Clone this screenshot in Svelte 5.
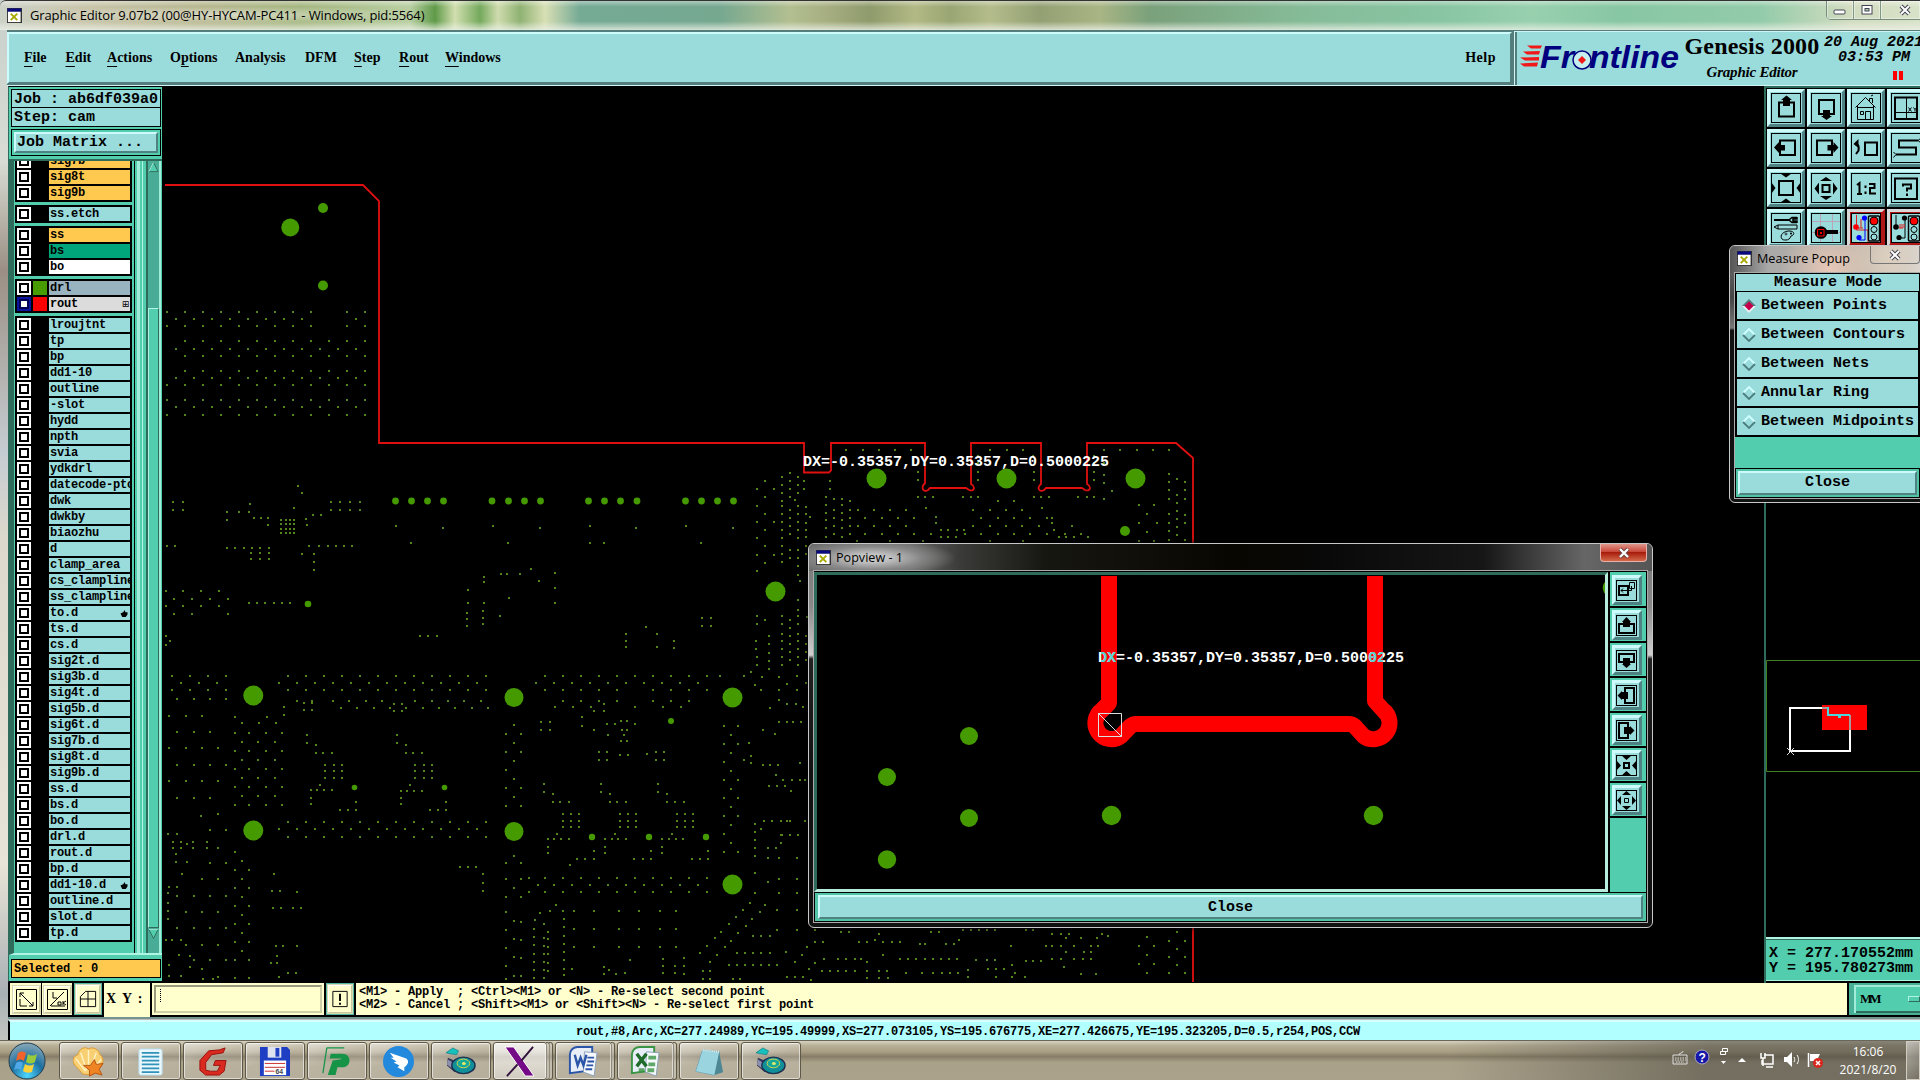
<script>
  const menus = [
    { name: 'File', key: 0 }, { name: 'Edit', key: 0 }, { name: 'Actions', key: 0 },
    { name: 'Options', key: 1 }, { name: 'Analysis', key: -1 }, { name: 'DFM', key: -1 },
    { name: 'Step', key: 0 }, { name: 'Rout', key: 0 }, { name: 'Windows', key: 0 }
  ];

  const plain = (names) => names.map((name) => ({ name }));
  const groups = [
    [{ name: 'sig7b', kind: 'signal' }, { name: 'sig8t', kind: 'signal' }, { name: 'sig9b', kind: 'signal' }],
    [{ name: 'ss.etch' }],
    [{ name: 'ss', kind: 'signal' }, { name: 'bs', kind: 'mask' }, { name: 'bo', kind: 'paste' }],
    [{ name: 'drl', kind: 'drill', color: '#489c00' }, { name: 'rout', kind: 'rout', color: '#ff0000', active: true, mark: '⊞' }],
    plain(['lroujtnt', 'tp', 'bp', 'dd1-10', 'outline', '-slot', 'hydd', 'npth', 'svia', 'ydkdrl',
      'datecode-pto', 'dwk', 'dwkby', 'biaozhu', 'd', 'clamp_area', 'cs_clampline', 'ss_clampline', 'to.d', 'ts.d',
      'cs.d', 'sig2t.d', 'sig3b.d', 'sig4t.d', 'sig5b.d', 'sig6t.d', 'sig7b.d', 'sig8t.d', 'sig9b.d', 'ss.d',
      'bs.d', 'bo.d', 'drl.d', 'rout.d', 'bp.d', 'dd1-10.d', 'outline.d', 'slot.d', 'tp.d'])
  ];
  const linked = ['to.d', 'dd1-10.d'];

  const tools = ['up', 'down', 'home', 'xy', 'left', 'right', 'back', 'snake', 'fit', 'out', 'ratio', 'help', 'setup', 'snap', 'net1', 'net2'];
  const popTools = ['pick', 'pup', 'pdown', 'pleft', 'pright', 'pin', 'pout'];
  const modes = ['Between Points', 'Between Contours', 'Between Nets', 'Annular Ring', 'Between Midpoints'];

  // line = stroked with 2px, thin = stroked with 1px, solid = filled
  const shapes = {
    up: { line: 'M8 9.5H23V23.500H8z', solid: 'M15.500 2.500L21 7H19V13H12V7H10z' },
    down: { line: 'M8 7H23V21H8z', solid: 'M15.500 27L21 23H19V17H12V23H10z' },
    left: { line: 'M9 7.500H24V22H9z', solid: 'M3 14.500L8 9V12H14V17.500H8V20z' },
    right: { line: 'M6 7.500H21V22H6z', solid: 'M27.500 14.500L22.500 9V12H16.500V17.500H22.500V20z' },
    home: { thin: 'M4.500 14.500L14.500 4.500L24.500 14.500M6.500 13V26.500H22.500V13M6 14.500H23M9.500 18.500H12.500V21.500H9.500zM14.500 26V18.500H19.500V26M18.500 8V5.500H21.500V10M20 3l2-1' },
    xy: { line: 'M4 4.500H26V26H4z', thin: 'M15.500 4V26M4 19.500H26M17.500 14.500l3 4m0-4l-3 4M22.500 14.500l1.500 2l1.500-2M24 16.500v2' },
    back: { line: 'M14 9.500H26V22H14zM4 11C8 11 8 14 7.500 17.500L5 21', solid: 'M2.500 11L7.500 6V15z' },
    snake: { line: 'M27 7.500H8V14.500H25V21.500H5', thin: 'M30 5l-3 2.500l3 2.500M2.500 19l2.500 2.500l-2.500 3' },
    fit: { line: 'M8 8H22V22H8z', solid: 'M9.500 0.500H20.500L15 4.500zM9.500 29.500H20.500L15 25.500zM0.500 9.500V20.500L4.500 15zM29.500 9.500V20.500L25.500 15z' },
    out: { line: 'M11.500 12H18.500V19H11.500z', solid: 'M15 4L21 8H9zM15 27L21 23H9zM3.500 15.500L8 9.500V21.500zM26.500 15.500L22 9.500V21.500z' },
    help: { line: 'M4 5.500H26V26H4zM12 13.500V11.500H20V15.500H16V18.500M16 20.500V23' },
    ratio: { line: 'M6 12L8.500 10V21M6 21H11M14.500 12.500V15M14.500 18.500V21M18 11H23.500V15H19V20.500H25' },
    pick: { line: 'M3 6H12V15H3z', thin: 'M5 10.500H15.500V6M5 10.500l2-2m-2 2l2 2M13.500 2.500H18.500V8.500H13.500z' },
    pup: { line: 'M3 9H18V18H3z', solid: 'M10.500 2L15 7H14V12H7V7H6z' },
    pdown: { line: 'M3 4H18V12H3z', solid: 'M10.500 18L15 14H14V8H7V14H6z' },
    pleft: { line: 'M9 3H18V18H9z', solid: 'M1.500 10.500L6 6V7H12V14H6V15z' },
    pright: { line: 'M3 3H12V18H3z', solid: 'M18.500 10.500L14 6V7H8V14H14V15z' },
    pin: { line: 'M8 8H13V13H8z', solid: 'M5 0H16L10.500 5zM5 21H16L10.500 16zM0 5V16L5 10.500zM21 5V16L16 10.500z' },
    pout: { thin: 'M8.500 8.500H12.500V12.500H8.500z', solid: 'M10.500 1L15 5H6zM10.500 20L15 16H6zM1 10.500L5 6V15zM20 10.500L16 6V15z' }
  };

  // drill hits, one patch per part of the board: rows are [y, ...x], cols are [x, ...y]
  const run = (from, to, step) => {
    const list = [];
    for (let v = from; v <= to; v += step) list.push(v);
    return list;
  };
  const r501 = run(501, 1095, 54);
  const r528 = run(528, 1070, 54);
  const r555 = run(555, 1095, 54);
  const gapRow = r501.filter((x) => x !== 987);
  const sparse = [705, 747, 798, 846];
  const patches = [
    {
      x: 0, y: 80, sy: 3,
      rows: [
        [695, ...gapRow], [717, ...run(528, 906, 54), 1068], [738, ...gapRow], [783, ...r555], [807, ...r528],
        [828, ...r555], [873, ...r555], [893, ...r528], [914, ...r501], [959, ...r501], [980, ...r528], [1004, ...r501],
        [1218, 894], [1239, 906], [1272, 750], [1295, 747, 717, 681], [1320, 681], [1314, 762, 783, 804], [1335, 804, 921],
        [1284, 882], [1317, 918], [1304, 939, 963], [1266, 519, 549, 993, 1020, 1050, 1080], [1290, 519, 549, 993, 1020, 1050, 1080],
        [1320, 843, 857, 870, 882], [1332, 843, 857, 870, 882], [1346, 843, 857, 870, 882], [1358, 843, 857, 870, 882]
      ],
      cols: []
    },
    {
      x: 0, y: 540, sy: 2.904,
      rows: [
        [17, 501, 525, 927, 957, 984, 1008, 1032, 1056], [22, ...run(681, 807, 25)], [38, 753, 780, 807], [55, 753, 780, 807],
        [40, 906, 942], [64, 942], [87, 942], [147, 498, 549, 603, 657], [170, 522, 576, 630, 684], [191, 498, 549, 603, 657],
        [214, 522, 576, 684], [183, ...run(747, 872, 24.600)], [292, 510], [279, 497], [305, 497],
        [395, 516, 570, 624, 678, ...run(864, 1139, 54)], [415, 543, 597, 651, ...run(837, 1139, 54)], [435, 516, 570, 624, 678, ...run(864, 1139, 54)],
        [462, 531, 582, 630, 678], [467, 891, 936, 999, 1047, 1098], [472, 912, 936], [488, 1023, 1071, 1122], [484, 852], [508, 852], [495, 912, 936],
        [511, 507, 558, 606], [514, 705, 801], [532, 726, 777, 828], [558, 531, 582, 630], [560, ...sparse], [586, 726, 774, 825],
        [604, 507, 558, 606, 654], [612, ...sparse], [638, 726, 774, 825], [653, 531, 582, 630, 678], [665, ...sparse], [690, 726, 774, 825],
        [700, 507, 558, 606, 654], [716, ...sparse], [743, 726, 774, 825], [748, 531, 582, 630], [769, ...sparse],
        [566, 921], [589, 921], [595, 948], [618, 948, 969, 996], [653, 975, 1002, 1026], [671, 975, 1002, 1026], [690, 975, 1002, 1026],
        [712, 960], [727, 933, 951, 972, 996], [748, 933], [767, 933], [760, 1068], [784, 1020, 1044, 1068],
        [819, ...run(864, 1139, 54)], [839, ...run(837, 1139, 54)], [862, ...run(864, 1139, 54)],
        [796, 654], [801, 603], [842, 630, 678], [854, 504, 531], [877, 519, 543, 579, 621], [884, 561], [893, 519, 543, 579, 621, 654],
        [911, 528], [934, 528, 561], [938, 630, 678], [906, 705], [932, 726], [957, 705, 747], [970, 546], [984, 606, 654, 726], [1010, 705, 747],
        [1036, 726], [1063, 705, 747], [1088, 726], [1115, 705, 747], [1140, 726], [1167, 705, 747], [1193, 726], [1219, 705, 747], [1271, 705, 747],
        [1007, 507, 531], [1024, 504], [1034, 531, 582, 630, 678], [1053, 504], [1078, 504], [1080, 558, 606, 654], [1100, 504],
        [1127, 531, 582, 630, 678], [1161, 498, 516, 543], [1175, 558, 606, 654], [1204, 537], [1207, 570], [1221, 582, 630, 678],
        [1234, 507], [1240, 570], [1246, 606], [1266, 507, 543], [1275, 609, 639], [1270, 654],
        [969, 822], [1019, 816, 840], [1021, 891], [1070, 819, 843, 879, 903], [1179, 828, 849, 891], [1207, 831], [1228, 813, 831], [1257, 864, 888], [1269, 837]
      ],
      cols: []
    },
    {
      x: 380, y: 480, sy: 3,
      rows: [
        [138, 48, 339, 630, 918], [144, 189, 480, 768, 1059], [188, 93, 384, 630, 672, 963],
        [267, 453], [282, 363, 381, 420], [303, 477], [354, 387], [408, 360], [468, 120, 144, 171],
        [441, 798], [414, 966, 993], [438, 966, 993],
        [588, ...run(48, 318, 54), ...run(495, 981, 54), 1020, 1092], [609, ...run(21, 291, 54), ...run(468, 955, 54)],
        [630, ...run(48, 318, 54), 495, 549, 603, 657, 711, 819, 873, 927, 981], [663, 6, 105, 156, 204, 252, 303, 549, 603, 657, 711, 819, 873, 927],
        [672, 42, 66, 672], [684, 30, 78, 129, 177, 225, 276, 324], [692, 42, 66, 642, 672], [681, 525, 579, 633, 765, 849, 903],
        [711, 606], [738, 606], [726, 483, 510], [750, 483, 510, 642, 726, 741], [732, 681, 705, 765], [723, 723, 741], [765, 684, 732], [783, 723, 741],
        [816, 657, 681, 828, 852], [840, 657, 681, 828, 852], [825, 720, 744], [822, 801],
        [765, 51], [789, 51], [795, 78], [819, 78, 99, 126], [855, 105, 132, 156], [873, 105, 132, 156], [894, 105, 132, 156],
        [915, 90], [932, 63, 81, 102, 126], [954, 63], [972, 63], [966, 198], [990, 150, 174, 198],
        [1026, ...run(48, 318, 54)], [1047, ...run(21, 291, 54)], [1071, ...run(48, 318, 54)],
        [912, 492, 663, 834], [936, 492, 663, 834], [942, 519, 690, 861], [966, 519, 540, 567, 690, 711, 738, 861, 885, 912],
        [1002, 549, 573, 597, 720, 744, 768, 891, 915, 939], [1023, 549, 573, 597, 720, 744, 768, 891, 915, 939], [1041, 549, 573, 597, 720, 744, 768, 891, 915, 939],
        [1062, 531, 705, 876], [1078, 504, 522, 543, 567, 675, 696, 714, 738, 846, 867, 888, 909], [1101, 504, 675, 846], [1119, 504, 675, 846],
        [1113, 642, 813, 984], [1137, 591, 615, 642, 762, 789, 813, 936, 960, 984], [1155, 570],
        [1161, 240, 264, 288], [1194, 447, ...run(495, 981, 54)], [1215, 474, ...run(522, 955, 54)], [1236, 447, ...run(495, 981, 54)],
        [1275, 528, 1155], [1293, 510, 549, 582, 642, 717, 777, 840, 888], [1299, 480], [1347, 582, 642, 717, 777, 840, 888],
        [1401, 582, 642, 717, 777, 840, 888], [1440, 750], [1461, 672], [1470, 687], [1482, 672, 708], [1479, 735],
        [576, 1113], [591, 1146, 1197], [615, 1125], [612, 1221], [630, 1143, 1197, 1251], [660, 1197], [672, 1221, 1248], [684, 1170],
        [726, 1197, 1221, 1239], [750, 1149], [762, 1185], [789, 1107], [828, 1113], [840, 1092], [849, 1113], [855, 1149, 1170, 1194],
        [885, 1188], [900, 1209, 1236], [918, 1167, 1191, 1215], [933, 1233], [1023, 1152, 1176, 1203, 1221], [1047, 1143], [1065, 1206, 1230, 1254],
        [1089, 1203], [1104, 1164, 1188], [1134, 1164, 1197, 1251], [1197, 1197, 1251], [1206, 1164], [1239, 1197, 1251],
        [1269, 1110], [1290, 1089, 1191, 1251], [1296, 1140], [1311, 1068], [1317, 1116], [1332, 1047], [1338, 1098], [1350, 1191, 1251], [1356, 1023],
        [1359, 1074], [1368, 1119, 1143, 1170], [1374, 1005], [1383, 1053], [1398, 981], [1401, 1035], [1419, 960, 1071, 1095, 1119, 1143, 1170],
        [1425, 1011], [1446, 990, 1245], [1455, 1047, 1071, 1095, 1119, 1143, 1167, 1191], [1416, 1218], [1473, 969, 990], [1491, 1221, 1245], [1497, 969, 990, 1059, 1080]
      ],
      cols: [
        [264, 330, 369], [261, 399, 417, 438], [312, 291, 306, 369], [309, 393, 414, 432], [525, 279, 324, 369],
        [738, 462, 483, 501], [831, 462, 501], [882, 483, 504], [309, 1182, 1209, 1233],
        [402, 735, 789, 843, 897, 951], [378, 762, 816, 870, 924, 978], [423, 762, 816, 924, 978],
        [402, 1128, 1224, 1323, 1377, 1431, 1488], [378, 1149, 1197, 1251, 1296, 1350, 1404, 1458, 1497], [423, 1149, 1197, 1251, 1326, 1380, 1434, 1488],
        [1032, ...run(738, 1120, 54)], [1074, 738, 792, 900, 954, 1008, 1116], [1053, ...run(765, 1090, 54)],
        [462, ...run(1347, 1500, 24.500)], [465, 1320], [492, 1332, ...run(1374, 1500, 24)], [504, 1356, 1377, 1401, 1422, 1449, 1473],
        [552, 1317, 1341, 1368, 1392, 1416, 1440, 1467, 1485], [576, 1467], [849, 1437, 1458, 1479], [885, 1458, 1479], [912, 1434, 1458, 1482],
        [1125, 1032, 1056, 1080, 1104, 1128, 1179, 1239],
        [1131, 27, 78, 126, 174, 225, 273, 408, 432, 531, 555], [1155, 3, 51, 102, 150, 198, 249, 420], [1182, 27, 126, 225],
        [1167, 468, 492, 519, 543, 567], [1128, 483, 507]
      ]
    },
    {
      x: 780, y: 420, sy: 3,
      rows: [
        [90, 198, 249, 297, 345, 393, 631, 681, 730, 972, 1020, 1071, 1119, 1167], [107, 594, 760, 942], [231, 414, 435, 459, 549, 573, 594, 762, 783, 807, 894, 921, 942, 138],
        [237, 162, 186, 972], [243, 210, 654, 702], [264, 438, 786], [270, 234, 282, 330, 378, 579, 630, 678, 726], [294, 255, 306, 354, 402, 603, 654, 702, 750, 801, 816],
        [318, 234, 282, 330, 378, 579, 630, 678, 726, 777, 876], [342, 255, 306, 354, 402, 453, 555, 603, 654, 702, 750, 801, 855, 903],
        [330, 483, 504, 531, 552, 822], [352, 483, 504, 528, 837, 858, 882, 925], [291, 468, 90], [309, 468, 816],
        [255, 1077, 1122], [282, 1101], [309, 1077, 1131], [336, 1101], [213, 996], [363, 231, 330, 429, 630, 730, 1077, 1122],
        [483, 60], [591, 80], [852, 21, 48], [860, 69], [906, 21, 39, 63], [1029, 60], [1080, 9, 36, 60, 75], [1098, 15], [1113, 33],
        [1203, 3, 30, 75], [1245, 3, 30, 54], [1269, 3]
      ],
      cols: [
        [6, 170, 195, 219, 243, ...run(258, 360, 24), 378, 402, 426, 588, 612, 642, 663, 687, 711, 735],
        [30, 158, 182, 207, 231, ...run(270, 360, 24), 390, 414, 600, 624, 648, 672, 696, 720],
        [54, 170, 195, 219, 258, ...run(282, 360, 24), 390, 414, 438, 465, 540, 570, 588, 612, 642, 663, 687, 711, 735],
        [72, 182, 207], [78, 261, 282, 309, 330, 352, 378, 402, 648, 672, 696, 720, 789], [45, 240],
        [138, 255, 279, 300, 324, 352], [162, 270, 294, 318, 342], [186, 255, 279, 300, 324, 352], [210, 270, 294, 318, 342],
        [150, 182, 207], [414, 128, 155, 180], [594, 128, 155, 180], [762, 155, 180], [942, 128, 155, 180],
        [1167, 162, 186, 210, 237, 282, 309, 333, 360], [1191, 177, 225, 249, 273, 297, 321, 345], [1215, 186, 210, 237, 285, 309, 360], [972, 128, 165, 190],
        [51, 768, 810, 1314, 1377, 1419, 1470, 1530]
      ]
    },
    {
      x: 796, y: 922, sy: 3,
      rows: [
        [24, 57, 501, 525, 549, 573, 597, 690, 711], [30, 135, 159, 405, 429, 1143], [35, 249, 768, 795, 819, 918], [60, 57, 81, 189, 213, 261, 288, 312],
        [54, 237, 489], [75, 33], [66, 372, 387, 450, 474], [98, 18, 261], [111, 84, 126, 150, 177, 195, ...run(312, 484, 24.500)], [122, 57], [141, 39],
        [147, 78, 102, 126, 150, 177, 249, 273], [119, 213], [147, 213], [168, 213, 249, 276], [174, 45], [164, 21],
        [153, 330, 378, 411, 438, 462, 486], [114, 540, 573, 597], [72, 645, 750, 768, 795, 834, 885, 906], [48, 810, 855, 903], [42, 936],
        [117, 690, 711, 735], [111, 768, 795, 834, 861, 885], [90, 810, 864, 885], [134, 804], [156, 855, 900], [128, 648],
        [141, 576, 600, 624], [165, 600, 648, 687], [152, 657], [144, 516], [165, 516]
      ],
      cols: [
        [1029, 72, 126], [1053, 45, 98, 153], [1074, 72, 126], [1119, 57, 104, 153], [1143, 81, 128], [1167, 57, 104, 153]
      ]
    }
  ];

  let hits = '';
  for (const p of patches) {
    const add = (x, y) => {
      hits += `M${Math.round(p.x + x / 3) - 1} ${Math.round(p.y + y / p.sy) - 1}h2v2h-2z`;
    };
    for (const [y, ...xs] of p.rows) xs.forEach((x) => add(x, y));
    for (const [x, ...ys] of p.cols) ys.forEach((y) => add(x, y));
  }

  const pads = [
    [290.300, 227.500, 9], [323, 208, 5], [323, 285.500, 5], [253.300, 695.500, 10], [253.300, 830.500, 10], [308, 604, 3.300],
    [514, 697.500, 9.500], [514, 831.500, 9.500], [732.500, 697.500, 10], [732.500, 884.500, 10], [775.500, 591.500, 10],
    [671, 721, 3], [592, 837, 3.200], [649, 837, 3.200], [706, 837, 3.200], [354.500, 787.500, 2.800], [444.500, 787.500, 2.800],
    [876.500, 478.500, 10], [1006.500, 478.500, 10], [1135.500, 478.500, 10], [1125, 531, 5],
    ...[395.500, 411.500, 427.500, 443.500, 492, 508.500, 524.500, 540.500, 588.500, 604.500, 620.500, 637, 685.500, 701.500, 717.500, 733.500].map((x) => [x, 501, 3.400])
  ];
  const popPads = [[970, 736, 9], [888, 777, 9], [970, 818, 9], [888, 859.500, 9.200], [1112.500, 815.500, 9.700], [1374.500, 815.500, 9.700]];

  const apps = [
    { name: 'shell', w: 60 }, { name: 'notes', w: 60 }, { name: 'gerber', w: 60 }, { name: 'floppy', w: 60 }, { name: 'pads', w: 60 }, { name: 'wing', w: 60 },
    { name: 'reel', w: 60 }, { name: 'xming', w: 54, stack: 2, active: true }, { name: 'word', w: 57, stack: 1 }, { name: 'excel', w: 57, stack: 1 }, { name: 'notepad', w: 60 }, { name: 'reel', w: 60 }
  ];

  let mode = $state('Between Points');
  let entry = $state('');
</script>

{#snippet appIcon()}
  <svg class="app-icon" viewBox="0 0 16 16">
    <rect width="16" height="16" fill="#333" />
    <rect x="0.500" y="0.500" width="14.500" height="3.500" fill="#0a0a80" />
    <rect x="1" y="4" width="13.500" height="11" fill="#fff" />
    <path d="M4 6l7 7M11 6l-7 7" stroke="#a8a800" stroke-width="2" />
  </svg>
{/snippet}

{#snippet glyph(name, size)}
  <svg class="glyph" viewBox="0 0 {size} {size}" width={size} height={size}>
    {#if name === 'setup'}
      <path d="M3 6H18V8H3z" /><path d="M26 4.500h-5l-3 2.500l3 2.500h5M26 4v2h-4v2h4v2" fill="none" stroke="#000" stroke-width="1.500" />
      <path d="M3 14l4-2H26V16H7zM7 12V16" fill="none" stroke="#000" />
      <path d="M11 26c-3-4 2-8 7-8c6 0 6 4 2 5c-1 3-3 4-5 4c-2 0-3 0-4-1z" fill="none" stroke="#000" />
      <circle cx="15" cy="21" r="1" fill="none" stroke="#000" stroke-width=".7" /><circle cx="20" cy="20.500" r="1" />
    {:else if name === 'snap'}
      <path d="M9.500 1V29M21.500 1V29M1 8.500H29M1 19.500H29" stroke="#b8a5b8" />
      <path d="M13 17H27V21H13z" /><circle cx="10" cy="19.500" r="6.300" />
      <path d="M6.500 16.500H13V23H6.500z" fill="none" stroke="#f00" /><rect x="9" y="19" width="2" height="2" fill="#f00" />
    {:else if name === 'net1' || name === 'net2'}
      {#if name === 'net1'}
        <path d="M5.500 2V17H17V29M10 6v9M5 15h7" fill="none" stroke="#e02020" /><path d="M14 5V27H8" fill="none" stroke="#00f" />
        <circle cx="13.500" cy="5" r="2.600" fill="#00f" /><circle cx="8" cy="24.500" r="2.600" fill="#00f" /><circle cx="5" cy="14" r="2.800" fill="#f00" />
      {:else}
        <path d="M5 2V14M14 5V25H8" fill="none" stroke="#000" /><path d="M8 15h4M9 11v4M11 11v4M13 11v4" fill="none" stroke="#e02020" />
        <circle cx="13.500" cy="5" r="2.600" /><circle cx="8" cy="24.500" r="2.600" /><circle cx="5" cy="14" r="2.800" />
      {/if}
      <rect x="17.500" y="3" width="11" height="25" rx="1" fill="#9adbdb" stroke="#000" stroke-width="1.500" />
      <circle cx="23" cy="8" r="4" fill="#f00" stroke="#000" /><circle cx="23" cy="16.500" r="3" fill="none" stroke="#000" /><circle cx="23" cy="24" r="3" fill="none" stroke="#000" />
    {:else}
      {@const s = shapes[name]}
      {#if s.line}<path d={s.line} fill="none" stroke="#000" stroke-width="2" />{/if}
      {#if s.thin}<path d={s.thin} fill="none" stroke="#000" />{/if}
      {#if s.solid}<path d={s.solid} />{/if}
    {/if}
  </svg>
{/snippet}

{#snippet taskIcon(name)}
  <svg class="task-icon" viewBox="0 0 32 32">
    {#if name === 'shell'}
      <path d="M5 23C-3 17 0 10 5 9C6 3 12 0 16 3C21 0 27 4 28 9C33 13 31 20 27 23L19 30L10 29z" fill="#f8cf72" stroke="#d99a35" />
      <path d="M13 26L3 13M14 25L8 7M16 24L16 4M18 24L24 7M20 25L29 14" stroke="#fff3c4" stroke-width="1.500" />
      <path d="M22 14l2 5l7-1l-4 6l3 6l-7-2l-6 3l0-6l-6-5l7 0z" fill="#ee8424" stroke="#b65510" />
    {:else if name === 'notes'}
      <rect x="4" y="3" width="24" height="27" rx="2" fill="#eaf7fd" stroke="#b7dbe9" />
      <path d="M7 7H25M7 11H25M7 15H25M7 19H25M7 23H25M7 27H25" stroke="#2f92b8" stroke-width="1.800" />
    {:else if name === 'gerber'}
      <path d="M29 2L27 7L15 9L9 17V25L14 26H21L24 20H17L19 15H30L28 26L23 30H9L3 25V15L12 5L23 4z" fill="#d92a20" stroke="#9c120c" />
    {:else if name === 'floppy'}
      <path d="M1 1H29L32 4V31H1z" fill="#1e3fc4" /><rect x="9" y="1" width="14" height="11" fill="#dde2ee" /><rect x="17" y="2" width="4" height="9" fill="#1e3fc4" />
      <rect x="5" y="15" width="23" height="15" fill="#fff" /><path d="M6 18H27M6 22H27M6 26H16" stroke="#c83030" />
      <text x="17" y="29" class="disk">64</text>
    {:else if name === 'pads'}
      <path d="M6 2H24M6 2L2 28" stroke="#159447" stroke-width="1.300" fill="none" />
      <path d="M10 8H22C32 8 32 22 22 22H17L15 30H7L12 15L19 14C22 14 22 13 19 13H9z" fill="#159447" />
    {:else if name === 'wing'}
      <circle cx="16" cy="16" r="16" fill="#2389dc" /><path d="M7 7L24 13C28 16 25 20 22 22L22 26L15 22L17 20L11 17L14 16L8 12L11 12z" fill="#fff" />
    {:else if name === 'reel'}
      <path d="M3 12L12 16L10 27L2 20z" fill="#343657" /><path d="M3 14l5 3l-1 6l-5-4z" fill="#8c8fae" />
      <ellipse cx="19" cy="20" rx="12" ry="8.500" fill="#118f98" stroke="#1f3050" stroke-width="1.500" />
      <path d="M1 7L8 2L14 5L12 9L5 8z" fill="#18c0bd" stroke="#0b6f78" stroke-width=".6" /><ellipse cx="19" cy="18" rx="6.500" ry="4.500" fill="#15a99a" stroke="#d8d54a" /><ellipse cx="19.500" cy="18" rx="2" ry="1.600" fill="#e7e86a" />
    {:else if name === 'xming'}
      <path d="M1 1L10 1L31 31L22 31z" fill="#740a85" stroke="#fff" stroke-width="1" /><path d="M30 1L18 15M14 19L3 31" stroke="#30103a" stroke-width="2" />
    {:else if name === 'word' || name === 'excel'}
      {@const c = name === 'word' ? '#2a55a8' : '#3a9443'}
      <path d="M3 27V9C3 4 7 1 11 1H26V25L3 28z" fill="#e8eef7" stroke={c} stroke-width="2" />
      <path d="M18 6L31 7L28 31L17 27z" fill="#f6f9fd" stroke="#8aa0b5" />
      {#if name === 'word'}
        <path d="M21 12H28M21 16H28M20 20H27M19 24H26" stroke={c} stroke-width="2" /><path d="M8 9L11 20L14 12L17 20L20 9" fill="none" stroke={c} stroke-width="2.500" />
      {:else}
        <path d="M20 10h8v4h-8zM20 17h7v4h-7zM10 23h6v4h-6zM19 23h7v4h-7z" fill={c} opacity=".8" /><path d="M8 8L18 21M18 8L8 21" stroke="#1f6b2a" stroke-width="3.500" />
      {/if}
    {:else}
      <path d="M10 4L27 6L22 30L3 26z" fill="#8ccbd8" stroke="#5f98a8" /><path d="M27 6L31 27L22 30z" fill="#4d8794" /><path d="M10 4L27 6L22 30L3 26z" fill="#9ad5df" />
      <path d="M10 4L27 6" stroke="#e5eef0" stroke-width="2" stroke-dasharray="1 1" />
    {/if}
  </svg>
{/snippet}

<div class="screen">
  <div class="titlebar">
    {@render appIcon()}
    <span>Graphic Editor 9.07b2 (00@HY-HYCAM-PC411 - Windows, pid:5564)</span>
    <div class="caption">
      <i><svg viewBox="0 0 14 12"><rect x="1" y="6" width="11" height="4" rx="1" fill="#fff" stroke="#445" /></svg></i>
      <i><svg viewBox="0 0 14 12"><rect x="2" y="1.500" width="10" height="8.500" fill="#fff" stroke="#445" /><rect x="5" y="4.500" width="4" height="2.500" fill="#aca" stroke="#445" /></svg></i>
      <i class="wide"><svg viewBox="0 0 14 12"><path d="M3 2L11 10M11 2L3 10" stroke="#445" stroke-width="4" /><path d="M3 2L11 10M11 2L3 10" stroke="#fff" stroke-width="2" /></svg></i>
    </div>
  </div>

  <header>
    <nav>
      <div class="menu">
        {#each menus as { name, key }}
          <span>{#if key >= 0}{name.slice(0, key)}<u>{name[key]}</u>{name.slice(key + 1)}{:else}{name}{/if}</span>
        {/each}
      </div>
      <span class="help">Help</span>
    </nav>
    <div class="brand">
      <svg class="logo" viewBox="0 0 164 30" width="164" height="30">
        <path d="M8 2.500H23L21.500 5.500H12zM4 8.500L21 8L20 11.500H8zM1 14.500L20 14V17.500H6zM1 20.500L19 19.500L18 23.500H5z" fill="#f01818" />
        <text class="word" x="21" y="25" textLength="34" lengthAdjust="spacingAndGlyphs">Fr</text>
        <text class="word" x="70" y="25" textLength="90" lengthAdjust="spacingAndGlyphs">ntline</text>
        <circle cx="63" cy="17" r="9" fill="#c5eeee" stroke="#00007f" stroke-width="1.500" />
        <path d="M63 13L67 17L63 21L59 17z" fill="#f01818" />
      </svg>
      <div class="product"><b>Genesis 2000</b><em>Graphic Editor</em></div>
      <div class="clock"><span>20 Aug 2021</span><span>03:53 PM</span><div class="pause"><i></i><i></i></div></div>
    </div>
  </header>

  <main>
    <aside class="layers">
      <div class="info">Job : ab6df039a0</div>
      <div class="info step">Step: cam</div>
      <div class="matrix"><button>Job Matrix ...</button></div>
      <div class="scroller">
        <div class="list">
          {#each groups as group}
            <div class="group">
              {#each group as layer}
                <div class="row">
                  <i class="check" class:active={layer.active}></i>
                  <i class="swatch" style:background={layer.color ?? '#000'}></i>
                  <span class="name {layer.kind ?? ''}">{layer.name}{#if layer.mark}<small>{layer.mark}</small>{/if}
                    {#if linked.includes(layer.name)}<svg viewBox="0 0 8 8"><path d="M0 4L3 2.500L5 0L5.500 2.500H8V5L6 8H2z" /></svg>{/if}</span>
                </div>
              {/each}
            </div>
          {/each}
        </div>
        <div class="edge"></div>
        <div class="track">
          <svg viewBox="0 0 12 12"><path d="M6 1L11 11H1z" fill="#52ceae" stroke="#2f6b5b" /><path d="M6 1L1 11" stroke="#b0f5e4" /></svg>
          <div class="thumb"></div>
          <svg viewBox="0 0 12 12"><path d="M1 1H11L6 11z" fill="#52ceae" stroke="#2f6b5b" /><path d="M1 1H11" stroke="#b0f5e4" /></svg>
        </div>
      </div>
      <div class="selected">Selected : 0</div>
    </aside>

    <svg class="board" viewBox="164 86 1600 897" width="1600" height="897">
      <path d={hits} fill="#54851c" />
      {#each pads as [cx, cy, r]}<circle {cx} {cy} {r} fill="#459a00" />{/each}
      <path d="M165 185H363L379 201V443H804V472.500H829L831 470.500V443H925V484M925 483C920 488 924 493 928 490L930 488H966L969 490C974 492 976 487 971 484V443H1041V484C1036 488 1040 493 1044 490L1046 488H1082L1085 490C1090 492 1092 487 1087 484V443H1176L1193 458V982" fill="none" stroke="#e01010" stroke-width="1.800" />
      <text x="803" y="466" textLength="306">DX=-0.35357,DY=0.35357,D=0.5000225</text>
    </svg>

    <aside class="panel">
      <div class="tools">
        {#each tools as name}
          <button class="tool" class:hot={name === 'net1' || name === 'net2'}><span>{@render glyph(name, 30)}</span></button>
        {/each}
      </div>
      <svg class="overview" viewBox="1766 650 154 140" width="154" height="140">
        <path d="M1925 660.500H1766.500V771.500H1925" fill="none" stroke="#3f8020" />
        <rect x="1822" y="705" width="45" height="25" fill="#f00" />
        <path d="M1850 715V751H1790V708H1828" fill="none" stroke="#fff" stroke-width="2" />
        <path d="M1822 708H1828M1850 715V730" stroke="#a99" stroke-width="2" fill="none" />
        <path d="M1828 707V715H1850M1838 717H1841" stroke="#48d8dc" stroke-width="2" fill="none" />
        <path d="M1787 748l7 7M1794 748l-7 7" stroke="#ddd" />
      </svg>
      <div class="readout"><span>X = 277.170552mm</span><span>Y = 195.780273mm</span></div>
    </aside>
  </main>

  <div class="command">
    <button class="cmd first"><svg viewBox="0 0 21 21"><path d="M.5.500h20v20H.5zM4 8V4h4M4 4l13 13M13 17h4v-4M4 10v7h7" /></svg></button>
    <button class="cmd second"><svg viewBox="0 0 21 21"><path d="M.5.500h20v20H.5zM3 17L17 3M6 3v6h4M4 17h14M11 13h3v3h-3zM16 12v4m3-4l-3 2l3 2" /></svg></button>
    <button class="cmd teal"><svg viewBox="0 0 21 21"><path d="M2.500 8L8 2.500H18.500V18.500H2.500zM10.500 2.500V18.500M2.500 10.500H18.500" /></svg></button>
    <span class="xy">X Y :</span>
    <div class="entry"><input bind:value={entry} /><i></i></div>
    <button class="cmd teal"><svg viewBox="0 0 21 21"><path d="M3 2.500H18V18.500H3z" /><path d="M10.500 5V12.500M10.500 14.500V16.500" stroke-width="2" /></svg></button>
    <div class="hint"><span>&lt;M1&gt; - Apply&nbsp; ; &lt;Ctrl&gt;&lt;M1&gt; or &lt;N&gt; - Re-select second point</span><span>&lt;M2&gt; - Cancel ; &lt;Shift&gt;&lt;M1&gt; or &lt;Shift&gt;&lt;N&gt; - Re-select first point</span></div>
    <div class="units"><span>MM</span><i></i></div>
  </div>
  <div class="status">rout,#8,Arc,XC=277.24989,YC=195.49999,XS=277.073105,YS=195.676775,XE=277.426675,YE=195.323205,D=0.5,r254,POS,CCW</div>

  <div class="taskbar">
    <svg class="orb" viewBox="0 0 38 38">
      <defs><radialGradient id="orb" cx=".5" cy=".9" r=".9"><stop offset="0" stop-color="#4fd8ff" /><stop offset=".5" stop-color="#1c6fa0" /><stop offset="1" stop-color="#8ba9b8" /></radialGradient></defs>
      <circle cx="19" cy="19" r="18" fill="url(#orb)" stroke="#1f3d50" />
      <path d="M10 11c3-2 5-2 8 0l-2 8c-3-2-5-2-8 0z" fill="#f0642c" /><path d="M20 12c3 2 5 2 9 0l-2 8c-3 2-6 2-9 0z" fill="#9ac93b" />
      <path d="M8 21c3-2 5-2 7 0l-2 7c-3-2-5-1-7 0z" fill="#4fa8e8" /><path d="M17 22c3 2 6 2 9 0l-2 8c-3 1-6 1-9-1z" fill="#fbd13c" />
    </svg>
    {#each apps as app}
      <div class="task" class:active={app.active} style:width="{app.w}px">{@render taskIcon(app.name)}</div>
      {#each Array(app.stack ?? 0) as _}<i class="stack"></i>{/each}
    {/each}
    <div class="tray">
      <svg viewBox="1668 1042 160 36" width="160" height="36">
        <path d="M1672 1056h14v9h-14zM1678 1056c0-3 4-1 4-4" fill="none" stroke="#ddd" /><path d="M1674 1059h11M1674 1061h11M1675 1063h8" stroke="#ddd" stroke-dasharray="1.500 1" />
        <circle cx="1701" cy="1058" r="7" fill="#1616a8" stroke="#aab" /><text x="1697.500" y="1062.500" class="q">?</text>
        <path d="M1721.500 1049.500h5v3h-5zM1719.500 1052.500h5v3h-5z" fill="none" stroke="#fff" /><path d="M1720 1062h5l-2.500 3z" fill="#fff" />
        <path d="M1737 1063h8l-4 -4z" fill="#fff" />
        <path d="M1763 1056h9v9h-11v-4M1765 1068h7M1760 1054v5h4v-5M1762 1059v8" fill="none" stroke="#fff" stroke-width="1.500" />
        <path d="M1783 1058h3l5-5v15l-5-5h-3z" fill="#fff" /><path d="M1793 1058c1 2 1 3 0 5M1796 1056c2 3 2 6 0 9" fill="none" stroke="#fff" />
        <path d="M1807.500 1054v14" stroke="#fff" stroke-width="1.500" /><path d="M1809 1055h10l-2 4l2 3h-10z" fill="#fff" />
        <circle cx="1817" cy="1064" r="5" fill="#d8261c" /><path d="M1815 1062l4 4m0-4l-4 4" stroke="#fff" stroke-width="1.500" />
      </svg>
      <div class="time"><span>16:06</span><span>2021/8/20</span></div>
      <div class="peek"></div>
    </div>
  </div>

  <div class="window popview">
    <div class="wintitle">{@render appIcon()}<span>Popview - 1</span><i class="close"><svg viewBox="0 0 14 12"><path d="M3 2L11 10M11 2L3 10" stroke="#644" stroke-width="4" /><path d="M3 2L11 10M11 2L3 10" stroke="#fff" stroke-width="2.300" /></svg></i></div>
    <div class="client">
      <div class="view">
        <svg class="canvas" viewBox="818 575 788 314" width="788" height="314">
          {#each popPads as [cx, cy, r]}<circle {cx} {cy} {r} fill="#459a00" />{/each}
          <path d="M1606 582c-3 3-3 8 0 12z" fill="#459a00" />
          <path d="M1110 576V703L1103 710A16 16 0 1 0 1122 736L1131 726.500Q1134 724 1137 724H1350Q1353 724 1356 726.500L1364.500 736A16 16 0 1 0 1384 710L1376 701V576" fill="none" stroke="#f00" stroke-width="16" stroke-linejoin="round" />
          <path d="M1099.500 713.500H1122.500V736.500H1099.500zL1122.500 736.500" fill="none" stroke="#ddd" stroke-width="1" />
          <text x="1099" y="662" textLength="306">DX=-0.35357,DY=0.35357,D=0.5000225</text>
          <text x="1099" y="662" textLength="306" class="over" clip-path="url(#cross)" aria-hidden="true">DX=-0.35357,DY=0.35357,D=0.5000225</text>
          <defs><clipPath id="cross"><rect x="1102" y="640" width="16" height="30" /><rect x="1368" y="640" width="16" height="30" /></clipPath></defs>
        </svg>
        <div class="side">
          {#each popTools as name}
            <div class="cell"><button><span>{@render glyph(name, 21)}</span></button></div>
          {/each}
        </div>
      </div>
      <div class="closebar"><button>Close</button></div>
    </div>
  </div>

  <div class="window measure">
    <div class="wintitle">{@render appIcon()}<span>Measure Popup</span><i class="close"><svg viewBox="0 0 14 12"><path d="M3 2L11 10M11 2L3 10" stroke="#445" stroke-width="4" /><path d="M3 2L11 10M11 2L3 10" stroke="#fff" stroke-width="2" /></svg></i></div>
    <div class="client">
      <div class="heading">Measure Mode</div>
      <div class="modes">
        {#each modes as name}
          <button class="mode" onclick={() => (mode = name)}>
            <svg viewBox="0 0 14 14" width="14" height="14">
              {#if mode === name}
                <path d="M7 0L14 7H0z" fill="#547d7d" /><path d="M0 7H14L7 14z" fill="#e8f4f4" /><path d="M7 2.500L11.500 7L7 11.500L2.500 7z" fill="#c4004c" />
              {:else}
                <path d="M1 7L7 1L13 7" fill="none" stroke="#d0ffff" stroke-width="1.800" /><path d="M1 7L7 13L13 7" fill="none" stroke="#4d7f7f" stroke-width="1.800" />
              {/if}
            </svg>{name}
          </button>
        {/each}
      </div>
      <div class="spacer"></div>
      <div class="closebar"><button>Close</button></div>
    </div>
  </div>
</div>

<style>
  :global(body) {
    margin: 0;
    overflow: hidden;
    background: #000;
  }

  .screen {
    position: relative;
    width: 1920px;
    height: 1080px;
    overflow: hidden;
    display: grid;
    grid-template-columns: 1920px;
    grid-template-rows: 30px 56px 897px 37px 20px 40px;
    font-family: 'Liberation Mono', 'Courier New', monospace;
    font-weight: bold;
    font-size: 15px;
    color: #000;
    background: linear-gradient(#c8d0cc, #d8dcd4 15%, #9b8f84 25%, #c6cdd2 42%, #dcd8cc 50%, #e9e4d8 80%, #a9b0b4 92%, #dcd8cc);
  }

  button {
    font: inherit;
    color: inherit;
    margin: 0;
    padding: 0;
    box-sizing: border-box;
    background: #9adbdb;
    border: 3px solid;
    border-color: #cdfafa #4f8282 #4f8282 #cdfafa;
  }

  svg { display: block; }

  /* title bar */
  .titlebar {
    display: flex;
    align-items: center;
    box-sizing: border-box;
    padding: 0 0 1px 7px;
    gap: 3px;
    border-top: 1px solid #333;
    border-radius: 6px 0 0 0;
    font: 13px 'Open Sans', 'Noto Sans', sans-serif;
    letter-spacing: -0.14px;
    background:
      linear-gradient(rgba(255, 255, 255, 0.4), transparent 20%, transparent 70%, rgba(235, 240, 230, 0.8)),
      linear-gradient(90deg, #cdd2c8, #c9c6ac 80px, #b5b48c 200px, #a3b57e 300px, #b9cfa2 410px, #5f9a48 435px, #d2dfb0 455px, #74a95c 480px, #d0dcae 498px, #8fb273 520px, #d8dfb4 545px, #75aa95 580px, #76a890 720px, #b3bf90 790px, #a5ad80 830px, #8f9b6c 870px, #b2b985 915px, #99a673 950px, #b4bc8b 990px, #93a073 1040px, #a9b584 1100px, #7aa17b 1150px, #86bb98 1300px, #88c5a2 1440px, #98d0ae 1530px, #88c7a3 1620px, #92cba9 1760px, #d2dcc0 1850px, #d8e2c8);
  }
  .titlebar > span { padding: 0 5px; background: radial-gradient(closest-side, rgba(255, 255, 255, 0.5), rgba(255, 255, 255, 0)); white-space: nowrap; }
  .app-icon { width: 15px; height: 15px; flex: none; }
  .caption { display: flex; margin-left: auto; align-self: flex-start; border: 1px solid #788c7c; border-top: 0; border-right: 0; border-radius: 0 0 0 5px; }
  .caption i { width: 26px; height: 18px; display: grid; place-items: center; border-right: 1px solid #829886; box-shadow: inset 0 0 0 1px rgba(255, 255, 255, 0.4); }
  .caption i.wide { width: 39px; border-right: 0; padding-left: 0; }
  .caption i.wide svg { margin-left: 8px; }
  .caption svg { width: 14px; height: 12px; }

  /* menu */
  header {
    display: flex;
    margin-left: 7px;
    background: #547d7d;
    border-bottom: 1px solid #d0f4f4;
    box-sizing: border-box;
    padding-top: 2px;
  }
  nav {
    display: flex;
    width: 1505px;
    height: 52px;
    flex: none;
    box-sizing: border-box;
    align-items: center;
    padding: 0 14px 0 15px;
    background: #9adbdb;
    border: 2px solid;
    border-color: #cdfafa #547d7d #547d7d #cdfafa;
    font: bold 14px 'Liberation Serif', 'Times New Roman', serif;
  }
  .menu { display: grid; grid-template-columns: 41.500px 41.500px 63px 65px 70px 49px 45px 46px 60px; }
  nav u { text-underline-offset: 4px; text-decoration-thickness: 1px; }
  .help { margin-left: auto; letter-spacing: 0.5px; }
  .brand { flex: 1; display: flex; background: #9adbdb; margin-left: 3px; border-left: 2px solid #547d7d; overflow: hidden; min-width: 0; outline: 1px solid #d0f4f4; }
  .logo { margin: 11px 2px 0; flex: none; }
  text.word { font: italic bold 31px 'Liberation Sans', Arial, sans-serif; fill: #00007f; }
  .product { display: flex; flex-direction: column; font-family: 'Liberation Serif', serif; width: 138px; flex: none; align-items: center; margin-left: -2px; }
  .product b { font-size: 24px; line-height: 28px; white-space: nowrap; letter-spacing: 0.2px; }
  .product em { font-size: 15px; line-height: 17px; font-weight: bold; letter-spacing: -0.2px; margin-top: 4px; }
  .clock { display: flex; flex-direction: column; font-style: italic; line-height: 15px; white-space: pre; padding-top: 3px; margin-left: 3px; flex: none; width: 100px; }
  .clock span + span { padding-left: 14px; }
  .pause { display: flex; gap: 2px; padding: 6px 0 0 69px; }
  .pause i { width: 4px; height: 9px; background: #f00; }

  main { display: flex; margin-left: 8px; background: #000; min-height: 0; }

  /* layer list */
  .layers {
    width: 155px;
    flex: none;
    box-sizing: border-box;
    display: flex;
    flex-direction: column;
    background: #52ceae;
    border: 1px solid #000;
    border-left-color: #2f6b5b;
    height: 896px;
    padding-top: 2px;
  }
  .info { margin: 0 2px; width: 150px; height: 19px; box-sizing: border-box; line-height: 19px; padding-left: 2px; border: 1px solid #000; background: #9adbdb; white-space: nowrap; }
  .step { border-top: 0; line-height: 20px; }
  .matrix { margin: 2px 2px 0; width: 150px; height: 27px; box-sizing: border-box; border: 1px solid #000; padding: 2px; }
  .matrix button { width: 144px; height: 21px; text-align: left; line-height: 17px; padding-left: 1px; border-width: 2px; display: block; }
  .scroller { display: flex; height: 796px; margin-top: 3px; box-sizing: border-box; border-top: 2px solid #2f6b5b; border-left: 5px solid #2f6b5b; border-bottom: 2px solid #b0f5e4; overflow: hidden; }
  .list { width: 117px; overflow: hidden; display: flex; flex-direction: column; justify-content: flex-end; gap: 3px; height: 781px; margin-left: 1px; flex: none; }
  .group { background: #000; padding-top: 2px; width: 117px; }
  .row { display: grid; grid-template-columns: 14px 14px 81px; column-gap: 2px; height: 14px; padding: 0 0 2px 2px; }
  .check { width: 14px; height: 14px; box-sizing: border-box; border: 2px solid #fff; background: #fff; box-shadow: inset 0 0 0 2px #000; }
  .check.active { border-color: #0a14a0; box-shadow: inset 0 0 0 2px #000050; }
  .swatch { width: 14px; height: 14px; }
  .name { position: relative; background: #9adbdb; overflow: hidden; white-space: nowrap; font-size: 12px; letter-spacing: -0.2px; line-height: 14px; padding-left: 1px; }
  .name small { position: absolute; right: 1px; top: 1px; font: 9px 'DejaVu Sans', sans-serif; line-height: 13px; }
  .name svg { position: absolute; right: 2px; top: 4px; width: 8px; height: 7px; }
  .signal { background: #ffc84e; }
  .mask { background: #00a57b; }
  .paste { background: #fff; }
  .drill { background: #9ab3c0; }
  .rout { background: #dcdcdc; }
  .edge { width: 14px; flex: none; background: linear-gradient(90deg, #52ceae 2px, #000 2px 3px, #52ceae 3px 5px, #a0ecd8 5px 8px, #52ceae 8px 10px, #b0f5e4 10px 11px, #52ceae 11px); }
  .track { width: 15px; box-sizing: border-box; border-left: 2px solid #2f6b5b; border-right: 2px solid #a0ecd8; background: #48ac96; display: flex; flex-direction: column; }
  .track svg { width: 11px; height: 12px; flex: none; }
  .thumb { margin-top: 135px; height: 618px; flex: none; background: #52ceae; border: 1px solid; border-color: #b0f5e4 #2f6b5b #2f6b5b #b0f5e4; }
  .selected { margin: 4px 2px 0; width: 150px; height: 19px; box-sizing: border-box; border: 1px solid #000; background: #ffc84e; font-size: 12px; letter-spacing: -0.2px; line-height: 18px; padding-left: 2px; }

  .board { flex: none; margin-left: 1px; }
  text { font: bold 15px 'Liberation Mono', monospace; fill: #fff; }
  .over { fill: #58d0d0; }
  text.q { font: bold 12px 'Liberation Sans', sans-serif; }
  text.disk { font: bold 7px 'Liberation Sans', sans-serif; fill: #444; }

  /* right panel */
  .panel { flex: 1; display: flex; flex-direction: column; min-width: 0; overflow: hidden; border-left: 2px solid #2f6b5b; }
  .tools { display: grid; grid-template-columns: repeat(4, 38px); gap: 2px; width: 158px; border-top: 2px solid #2f6b5b; padding: 1px 0 0 1px; }
  .tool { width: 38px; height: 38px; }
  .tool span { display: block; width: 30px; height: 30px; margin: 1px; box-shadow: inset 0 0 0 1px #000; }
  .tool.hot { border-color: #d8d8d8 #b01818 #b01818 #d8d8d8; background: #b01818; }
  .hot span { background: #9adbdb; }
  .overview { margin-top: 403px; flex: none; }
  .readout { display: flex; flex-direction: column; margin-top: auto; height: 44px; box-sizing: border-box; background: #52ceae; border-top: 2px solid #b0f5e4; border-bottom: 1px solid #b0f5e4; box-shadow: inset 0 1px #2f6b5b; padding: 7px 0 0 3px; line-height: 15px; white-space: pre; margin-bottom: 2px; }

  /* command line */
  .command { display: flex; margin-left: 8px; background: #000; height: 34px; gap: 2px; border-bottom: 2px solid #77938f; font-size: 12px; letter-spacing: -0.2px; min-width: 0; }
  .cmd { width: 31px; height: 32px; flex: none; background: #ffffce; border: 1px solid #ffffce; padding: 2px; }
  .cmd.first { margin-left: 2px; }
  .cmd.second { width: 30px; margin-left: -1px; padding: 1px; }
  .cmd svg { width: 21px; height: 21px; padding: 2px; border: 1px solid; border-color: #fff #c8c8a0 #c8c8a0 #fff; fill: none; stroke: #000; outline: 1px solid #d8d8b0; }
  .cmd.teal { border: 2px solid #52b8a2; width: 28px; padding: 0; }
  .cmd.teal svg { width: 20px; height: 24px; padding: 1px; }
  .xy { width: 46px; flex: none; background: #ffffce; font: bold 14px 'Liberation Serif', serif; line-height: 32px; padding-left: 2px; letter-spacing: 0.4px; word-spacing: 2px; box-sizing: border-box; }
  .entry { position: relative; width: 172px; flex: none; height: 32px; box-sizing: border-box; background: #ffffce; padding: 2px; }
  .entry input { display: block; width: 168px; height: 28px; box-sizing: border-box; font: inherit; background: #ffffce; border: 2px solid; border-color: #9a9a7c #d0d0a8 #d0d0a8 #9a9a7c; }
  .entry i { position: absolute; left: 8px; top: 6px; height: 13px; border-left: 1px dotted #000; }
  .hint { width: 1491px; flex: none; display: flex; flex-direction: column; height: 32px; background: #ffffce; line-height: 13px; box-sizing: border-box; padding: 3px 0 0 3px; white-space: nowrap; }
  .units { flex: 1; display: flex; align-items: center; background: #52ceae; margin-right: -6px; border: 2px solid #48b096; border-width: 2px 0 2px 5px; box-shadow: inset 2px 2px #a0ecd8, inset 0 -2px #2f6b5b; box-sizing: border-box; height: 32px; padding-left: 6px; font: bold 13px 'Liberation Serif', serif; letter-spacing: -3px; }
  .units i { width: 10px; height: 4px; flex: none; margin-left: 29px; border: 1px solid; border-color: #b0f5e4 #2f6b5b #2f6b5b #b0f5e4; }
  .status { margin-left: 8px; background: #b1ffff; border-top: 2px solid #d8ffff; border-left: 2px solid #000; box-sizing: border-box; text-align: center; font-size: 12px; letter-spacing: -0.2px; line-height: 21px; padding-left: 6px; white-space: nowrap; }

  /* taskbar */
  .taskbar {
    display: flex;
    box-sizing: border-box;
    border-top: 1px solid #6a675a;
    padding: 1px 0 1px 8px;
    overflow: hidden;
    background: linear-gradient(#d6d3c0, #b8af96 12%, #a89e84 28%, #877d67 40%, #aaa189 55%, #aba28c);
  }
  .orb { width: 38px; height: 38px; margin-right: 13px; flex: none; }
  .task { flex: none; box-sizing: border-box; height: 38px; margin-right: 2px; padding-right: 2px; display: grid; place-items: center; border: 1px solid #5e5848; border-radius: 3px; box-shadow: inset 0 0 0 1px rgba(255, 255, 255, 0.55); background: linear-gradient(160deg, rgba(255, 255, 255, 0.55), rgba(255, 255, 255, 0.2) 45%, rgba(255, 255, 255, 0.12)); }
  .task.active { background: linear-gradient(rgba(255, 255, 255, 0.8), rgba(255, 255, 255, 0.45)); }
  .stack { width: 4px; height: 38px; box-sizing: border-box; flex: none; margin-left: -3px; margin-right: 2px; border: 1px solid #5e5848; border-left: 0; border-radius: 0 3px 3px 0; background: rgba(255, 255, 255, 0.3); }
  .task-icon { width: 31px; height: 31px; }
  .tray { display: flex; margin: -1px 0 -1px auto; padding-left: 220px; background: linear-gradient(90deg, transparent, rgba(70, 68, 60, 0.55) 55%); color: #fff; font: 12px 'Open Sans', 'Noto Sans', sans-serif; }
  .tray > svg { flex: none; }
  .time { width: 70px; display: flex; flex-direction: column; align-items: center; line-height: 18px; padding-top: 2px; margin-right: 3px; margin-left: 4px; }
  .peek { width: 14px; border: 1px solid #d0ccc0; background: linear-gradient(135deg, rgba(255, 255, 255, 0.5), rgba(120, 115, 100, 0.3)); box-sizing: border-box; }

  /* floating windows */
  .window { position: absolute; box-sizing: border-box; border: 1px solid #c8c8c8; border-radius: 6px; display: flex; flex-direction: column; }
  .wintitle { display: flex; align-items: center; gap: 5px; font: 12.600px 'Open Sans', 'Noto Sans', sans-serif; color: #000; }
  .close { margin-left: auto; align-self: flex-start; display: grid; place-items: center; height: 18px; box-sizing: border-box; border-radius: 0 0 4px 4px; }
  .close svg { width: 14px; height: 12px; }
  .client { display: flex; flex-direction: column; background: #000; outline: 1px solid #aaa; }
  .popview { left: 808px; top: 543px; width: 845px; height: 385px; padding: 0 5px 5px; background: linear-gradient(#777, #888 16%, #d0d0d0 29%, #222 30%, #111 60%); box-shadow: 0 0 5px #000; }
  .popview .wintitle { height: 27px; flex: none; margin: 0 -5px; padding: 0 5px 0 7px; border-radius: 5px 5px 0 0; background: radial-gradient(85px 19px at 62px 14px, #c4c4c4 20%, rgba(150, 150, 150, 0.7) 60%, rgba(120, 120, 120, 0)), linear-gradient(90deg, #6a6a6a, #666 12%, #3a3a38 18%, #171712 28%, #080600 50%, #080808 60%, #161616 80%, #666 92%, #555); }
  .popview .close { width: 47px; background: linear-gradient(#e0968a, #c9483a 45%, #a81c0c 50%, #d2694a); border: 1px solid #e8b0a8; border-top: 0; }
  .view { display: flex; height: 321px; border-top: 1px solid #000; box-sizing: border-box; }
  .canvas { border: 3px solid; border-color: #2f6b5b #b8ecdc #b8ecdc #2f6b5b; flex: none; }
  .side { flex: 1; background: #52ceae; border-left: 1px solid #000; border-right: 1px solid #000; padding-top: 1px; margin-left: 1px; }
  .cell { height: 35px; box-sizing: border-box; padding: 2px 2px; border: 1px solid #000; border-width: 0 0 2px; }
  .cell button { width: 30px; height: 30px; padding: 1px; }
  .cell span { display: block; width: 21px; height: 21px; box-shadow: inset 0 0 0 1px #000; }
  .closebar { box-sizing: border-box; padding: 2px; background: #52c4a6; border: 1px solid #000; }
  .closebar button { width: 100%; display: block; text-align: center; }
  .popview .closebar { height: 30px; padding: 2px 3px; }
  .popview .closebar button { height: 24px; border-width: 2px; line-height: 19px; }
  .measure { left: 1729px; top: 245px; width: 197px; height: 258px; padding: 0 5px 5px; background: linear-gradient(#777, #444 20%, #777 32%, #111 33%); }
  .measure .wintitle { height: 27px; flex: none; margin: 0 -5px; padding: 0 5px 2px 7px; box-sizing: border-box; border-radius: 5px 5px 0 0; background: radial-gradient(circle at 160px 12px, #ddd0c0, transparent 50px), radial-gradient(circle at 100px 24px, #e8c8b8, transparent 50px), linear-gradient(90deg, #555, #aaa 20%, #b8b0a4 70%, #ddd); }
  .measure .close { width: 50px; border: 1px solid #777; border-top: 0; }
  .heading { height: 17px; background: #9adbdb; line-height: 18px; margin: 1px 1px 0; padding-left: 38px; }
  .modes { display: flex; flex-direction: column; gap: 2px; padding: 1px 0 2px 2px; }
  .mode { display: flex; align-items: center; gap: 5px; height: 27px; width: 181px; border: 0; padding: 0 0 0 5px; white-space: nowrap; }
  .spacer { height: 31px; background: #52ceae; }
  .measure .closebar { width: 185px; height: 30px; }
  .measure .closebar button { height: 24px; border-width: 2px; line-height: 18px; }
</style>
